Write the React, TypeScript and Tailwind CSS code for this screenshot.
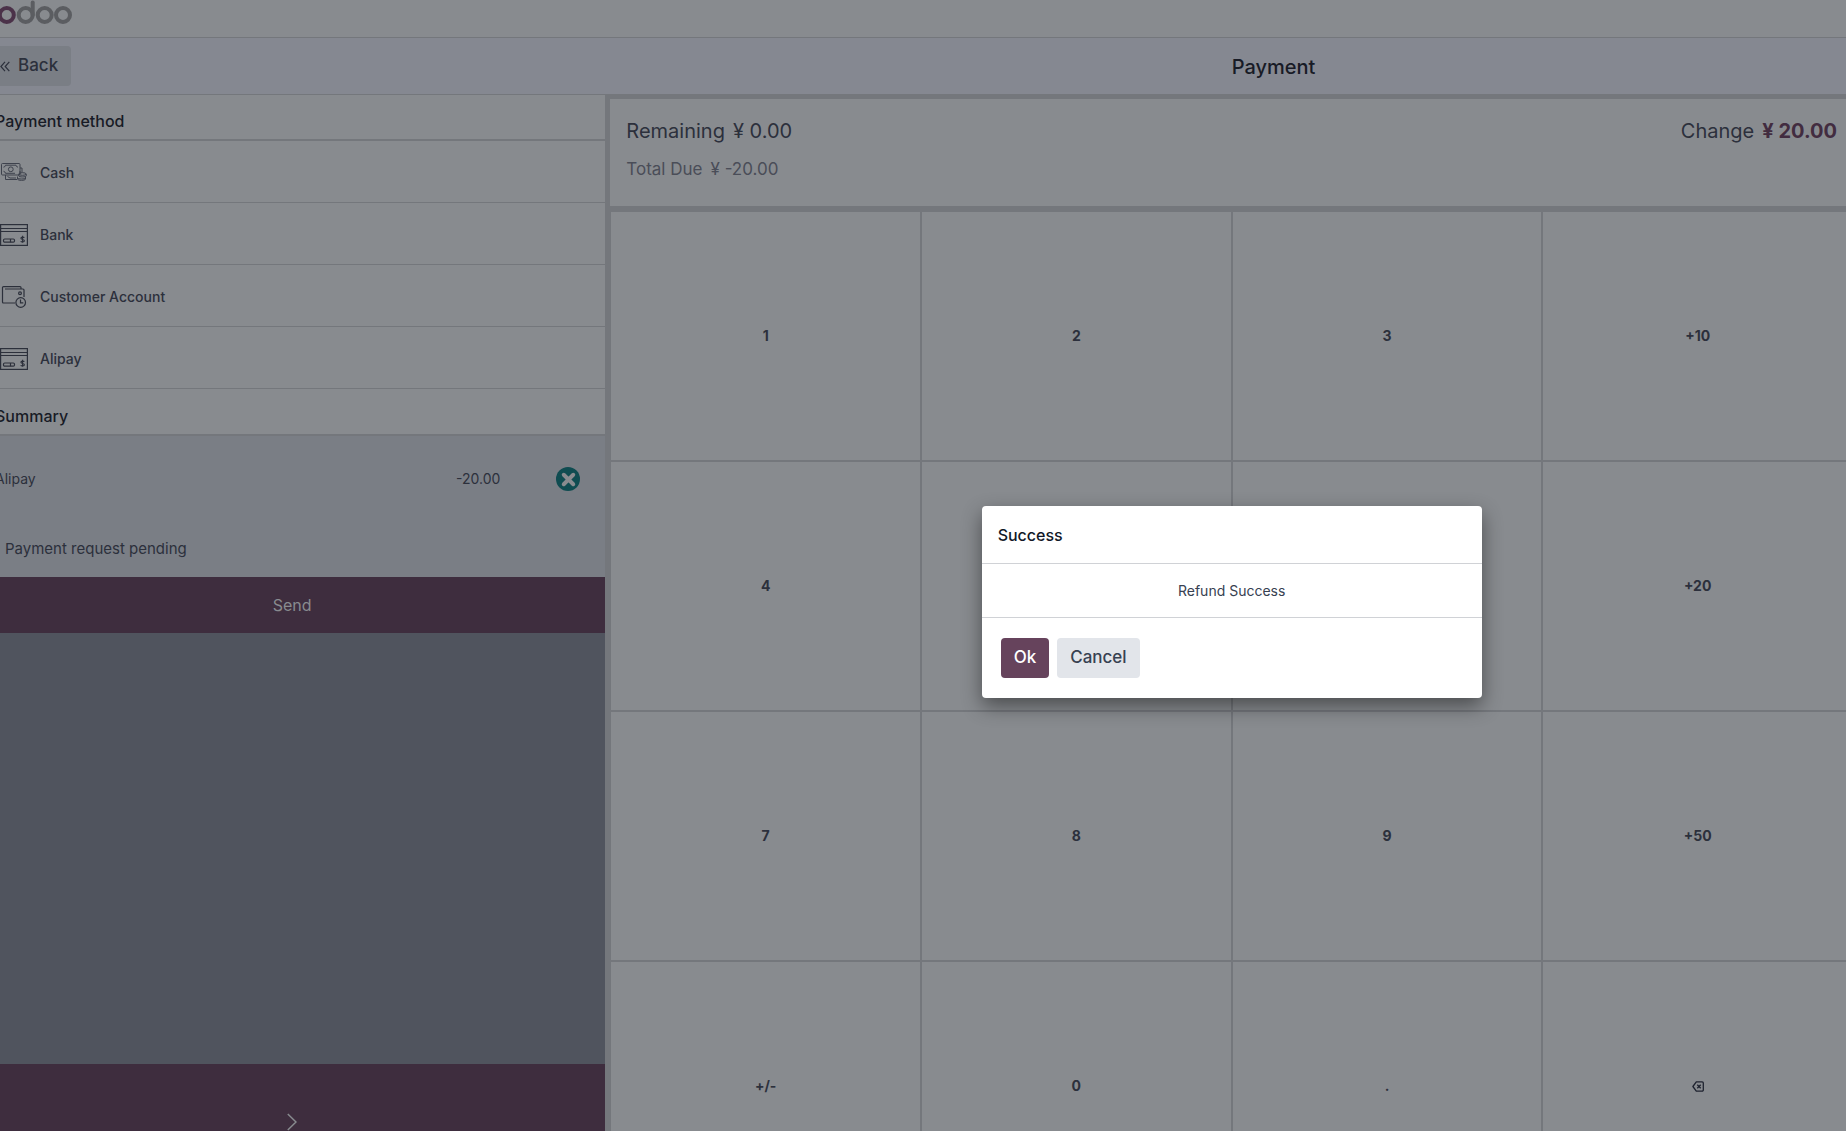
import React from "react";
import { X } from "lucide-react";

function OdooLogo() {
  return (
    <svg width="80" height="28" viewBox="-5 0 80 28" fill="none" strokeWidth="4" role="img" aria-label="odoo">
      <circle cx="6.8" cy="15" r="7" stroke="#4b3249" />
      <g stroke="#5b5d61">
        <circle cx="25.7" cy="15" r="7" />
        <path d="M32.7 15V2.4" strokeLinecap="round" />
        <circle cx="44.7" cy="15" r="7" />
        <circle cx="63" cy="15" r="7" />
      </g>
    </svg>
  );
}

function CashIcon() {
  return (
    <svg width="28" height="22" viewBox="0 0 28 22" fill="none" stroke="#3e424d" strokeWidth="1" aria-hidden="true">
      <rect x="1.5" y="1.5" width="18.500" height="11.5" rx="1" />
      <path d="M3.500 5.200a2.300 2.300 0 0 0 2-2h10.500a2.300 2.300 0 0 0 2 2M3.500 9.300a2.300 2.300 0 0 1 2 2h9.500" />
      <circle cx="10.800" cy="7.300" r="2.400" />
      <path d="M5.500 13v4.500H17M7.500 14.500l2.500 1.500h6M20 6h2v4.500M20 9v3" />
      <ellipse cx="22.500" cy="12" rx="3.700" ry="1.300" />
      <path d="M18.800 12v2c0 1.200 7.400 1.200 7.400 0v-2M17.500 14.500v2.500c0 1.800 8 1.800 8 0v-2M17.500 16c0 1.300 8 1.300 8 0" />
    </svg>
  );
}

function CardIcon() {
  return (
    <svg width="28" height="22" viewBox="0 0 28 22" fill="none" stroke="#2c303b" strokeWidth="1.2" aria-hidden="true">
      <rect x="0.6" y="0.6" width="26.800" height="20.800" />
      <path d="M0.600 4.500h26.800M0.600 7.500h26.800" />
      <rect x="3.500" y="15" width="11" height="3.200" rx="1.200" />
      <path d="M10.500 15v3.200" />
      <path d="M24.300 13.700c-.4-.8-3.400-.9-3.400.6 0 1.600 3.500.8 3.500 2.500 0 1.500-3.200 1.500-3.700.4M22.600 11.700v7" strokeWidth="1.100" />
    </svg>
  );
}

function WalletIcon() {
  return (
    <svg width="28" height="22" viewBox="0 0 28 22" fill="none" stroke="#2c303b" strokeWidth="1.200" aria-hidden="true">
      <path d="M15 17H3.500a1 1 0 0 1-1-1V1.600a1 1 0 0 1 1-1H20a1 1 0 0 1 1 1V3M5 3h18a1 1 0 0 1 1 1v7" />
      <circle cx="20" cy="7.300" r="1.400" />
      <circle cx="20.700" cy="16.500" r="4.800" />
      <path d="M20.500 13.500v3.300h2.800" />
    </svg>
  );
}

function BackspaceIcon() {
  return (
    <svg width="12" height="11" viewBox="0 0 12 11" fill="none" stroke="#1f2330" strokeWidth="1.300" role="img" aria-label="Backspace">
      <path d="M4.300.8h5.900a1.100 1.100 0 0 1 1.100 1.100v7.200a1.100 1.100 0 0 1-1.100 1.100H4.300L.9 5.500z" strokeLinejoin="round" />
      <path d="M5.300 3.700l3.400 3.600M8.700 3.700L5.300 7.300" />
    </svg>
  );
}

const methods = [
  { name: "Cash", icon: <CashIcon /> },
  { name: "Bank", icon: <CardIcon /> },
  { name: "Customer Account", icon: <WalletIcon /> },
  { name: "Alipay", icon: <CardIcon /> },
];

const keys = ["1", "2", "3", "+10", "4", "5", "6", "+20", "7", "8", "9", "+50", "+/-", "0", ".", "back"];

export default function App() {
  return (
    <div className="h-screen overflow-hidden bg-[#888b8f] font-['Inter',sans-serif] text-[#2c303c]">
      <div className="relative -ml-[21px] -mr-3">
        <header className="flex h-[38px] items-start border-b border-[#74777c] pl-4">
          <OdooLogo />
        </header>

        <div className="flex h-14 items-center bg-[#858891]">
          <div className="w-2/3 pl-2">
            <button className="flex h-10 items-center gap-2 rounded bg-[#7a7e85] px-[13px] text-[17px] font-medium">
              <svg width="10" height="11" viewBox="0 0 10 11" fill="none" stroke="#2c303c" strokeWidth="1.200" aria-hidden="true">
                <path d="M5 .8L.9 5.500 5 10.200M9.300.8L5.200 5.500l4.100 4.700" />
              </svg>
              Back
            </button>
          </div>
          <h1 className="pt-0.5 text-xl font-medium text-[#181b26]">Payment</h1>
        </div>

        <div className="flex">
          <aside className="flex w-1/3 flex-col border-t border-[#74777c] bg-[#50545e]">
            <h2 className="flex h-[46px] items-center border-b-2 border-[#74777c] bg-[#888b8f] pl-4 pt-2 text-base font-medium text-[#181b26]">
              Payment method
            </h2>
            {methods.map((m) => (
              <button
                key={m.name}
                className="flex h-[62px] items-center gap-3 border-b border-[#74777c] bg-[#888b8f] pl-[21px] pt-0.5 text-sm font-medium"
              >
                {m.icon}
                {m.name}
              </button>
            ))}
            <h2 className="flex h-[47px] items-center border-b-2 border-[#74777c] bg-[#888b8f] pl-4 pt-2 text-base font-medium text-[#181b26]">
              Summary
            </h2>
            <div className="bg-[#7a7e85]">
              <div className="flex h-[86px] items-center pl-4 pr-[25px] text-sm">
                <span className="flex-1">Alipay</span>
                <span>-20.00</span>
                <button
                  aria-label="Remove payment line"
                  className="ml-14 flex size-6 items-center justify-center rounded-full bg-[#0f4c51] text-[#888b8f]"
                >
                  <X size={19} strokeWidth={5} />
                </button>
              </div>
              <p className="flex h-[55px] items-center pl-[26px] text-[15px]">Payment request pending</p>
            </div>
            <button className="h-14 bg-[#3e2d3e] text-base text-[#888b8f]">Send</button>
            <div className="flex-1" />
            <button aria-label="Validate" className="mb-9 flex h-[116px] items-center justify-center bg-[#3e2d3e]">
              <svg width="10" height="18" viewBox="0 0 10 18" fill="none" stroke="#888b8f" strokeWidth="1.500" aria-hidden="true">
                <path d="M.8 1L9 9 .8 17" />
              </svg>
            </button>
          </aside>

          <main className="w-2/3 border-[5px] border-[#74777c]">
            <section className="flex h-28 justify-between border-b-[5px] border-[#74777c] px-4 pt-[18px]">
              <div className="flex flex-col gap-2.5">
                <p className="flex gap-2 text-xl">
                  <span>Remaining</span>
                  <span>¥ 0.00</span>
                </p>
                <p className="flex gap-2 text-[17px] leading-7 text-[#4a4d58]">
                  <span>Total Due</span>
                  <span>¥ -20.00</span>
                </p>
              </div>
              <p className="flex gap-2 text-xl">
                <span>Change</span>
                <span className="font-bold text-[#422c40]">¥ 20.00</span>
              </p>
            </section>
            <div className="grid grid-cols-4">
              {keys.map((k) => (
                <button
                  key={k}
                  className="flex h-[250px] items-center justify-center border border-[#74777c] text-sm font-bold"
                >
                  {k === "back" ? <BackspaceIcon /> : k}
                </button>
              ))}
            </div>
          </main>
        </div>

        <div
          role="dialog"
          aria-labelledby="dialog-title"
          className="absolute left-2/3 top-[506px] w-[500px] -translate-x-1/2 rounded bg-white text-[#374151] shadow-[0_8px_20px_rgba(0,0,0,0.45)]"
        >
          <h2 id="dialog-title" className="flex h-[58px] items-center border-b border-[#d0d2d6] px-4 text-base font-medium text-[#111827]">
            Success
          </h2>
          <p className="flex h-[54px] items-center justify-center border-b border-[#d0d2d6] text-sm">Refund Success</p>
          <div className="flex h-20 items-center gap-2 px-[19px]">
            <button className="h-10 rounded bg-[#66435c] px-[13px] text-[17px] font-medium text-white">Ok</button>
            <button className="h-10 rounded bg-[#e2e5ea] px-[13px] text-[17px] font-medium">Cancel</button>
          </div>
        </div>
      </div>
    </div>
  );
}
